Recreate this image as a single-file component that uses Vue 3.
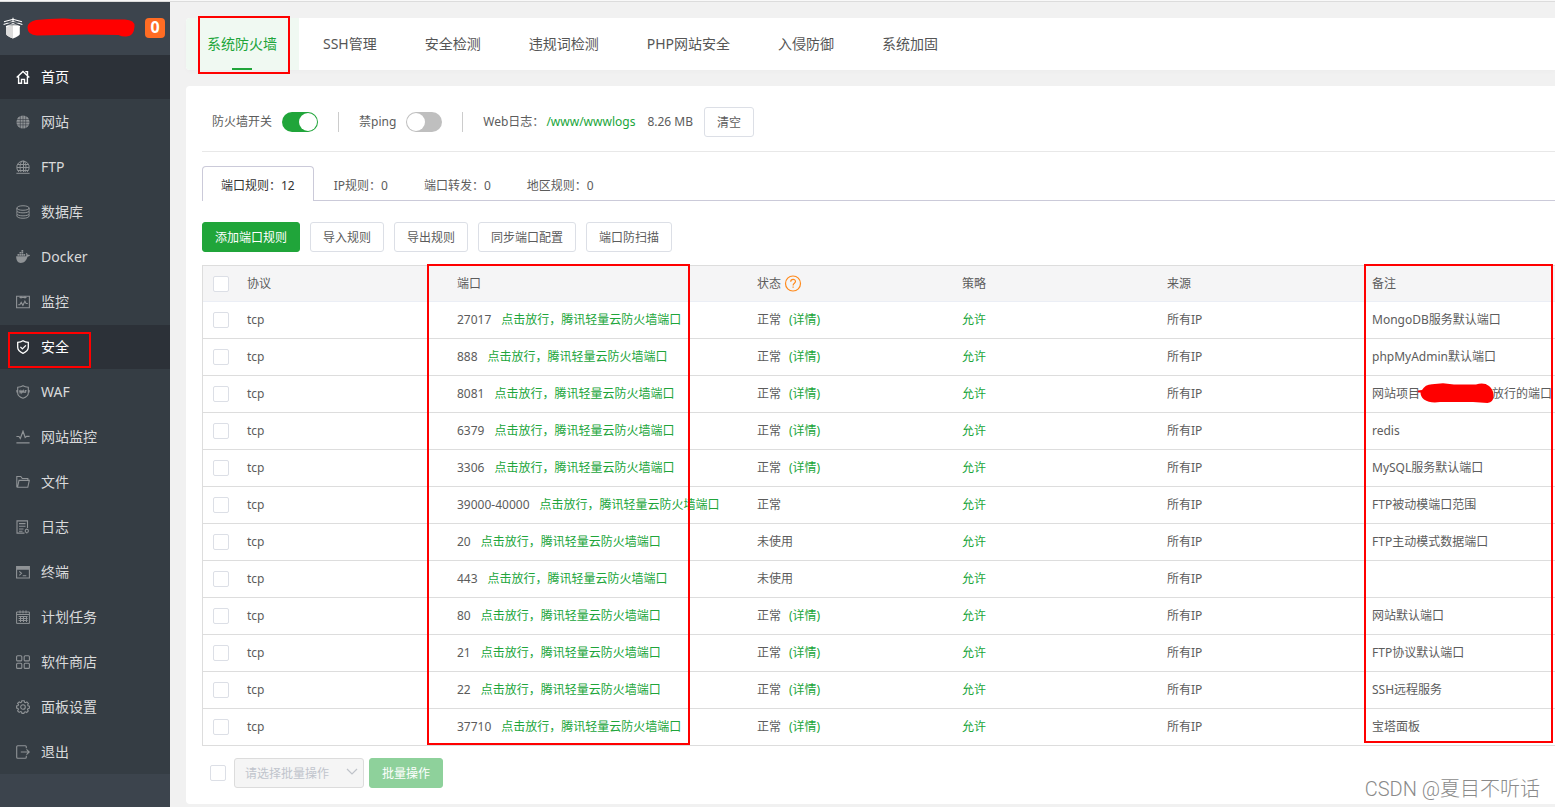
<script setup>
import { ref } from 'vue'

const menu = [
  { label: '首页', active: true, size: 1.4, lines: 'M.7 7.6 7 1.4l6.3 6.2M2.6 6.4v6.9h2.9V9.4h3v3.9h2.9V6.4M9.3 1.6h2.2v3.6' },
  { label: '网站', fill: 'M7 .4a6.6 6.6 0 1 0 0 13.2A6.6 6.6 0 0 0 7 .4z', cut: 'M0 4.5h14M0 7.2h14M0 9.9h14M4.3 0v14M7 0v14M9.7 0v14' },
  { label: 'FTP', size: 1, lines: 'M3 12a6.2 6.2 0 1 1 8 0M1 7.500h12M1.8 4.500h10.4M1.8 10.500h10.4M7.500.8V12M6 .8C3.600 3.600 3.600 9 5 12M8 .8C10.400 3.600 10.400 9 9 12M.4 13.300h13.200' },
  { label: '数据库', size: 1, lines: 'M.9 3c0-3 12.200-3 12.200 0s-12.200 3-12.200 0zM.9 3v2.600c0 3 12.200 3 12.200 0V3M.9 6.200v2.400c0 3 12.200 3 12.200 0V6.200M.9 9.200v1.800c0 3 12.200 3 12.200 0V9.200' },
  { label: 'Docker', fill: 'M.2 6.200h9.900c.4-.8.3-1.800-.2-2.600l.7-.6c.7.5 1.100 1.100 1.200 1.900.8-.1 1.600 0 2.200.4-.5 1-1.400 1.400-2.500 1.400C10.500 10.200 8.300 12.900 4.800 12.900 1.800 12.900 0 10.400.2 6.200zM1.500 3.900h1.700v1.900H1.500zM3.500 3.900h1.700v1.900H3.500zM5.500 3.900h1.700v1.900H5.500zM7.500 3.900h1.700v1.900H7.500zM3.500 2h1.700v1.600H3.500zM5.500 2h1.700v1.600H5.500zM5.500.1h1.700v1.600H5.500z' },
  { label: '监控', size: 1.1, lines: 'M.6 1.200h12.800v11.600H.6zM2.200 9.800h1.600l1.400-2.400 1.700 2.900 2-4 1.200 2.200h1.700M3.500 2.500h7M5 1.500v2M9 1.500v2' },
  { label: '安全', active: true, size: 1.3, lines: 'M7 .8c1.800 1.200 3.500 1.500 5.300 1.600v4.900c0 2.900-2.300 4.700-5.300 6-3-1.300-5.300-3.100-5.300-6V2.400C3.500 2.300 5.200 2 7 .8zM4.400 6.900l2 2 3.500-3.500' },
  { label: 'WAF', size: 1.1, lines: 'M7 .8c1.800 1.100 3.300 1.300 5.300 1.400v6c0 2.500-2.600 4-5.300 5-2.700-1-5.300-2.500-5.300-5v-6c2-.1 3.500-.3 5.300-1.400zM3.500 5.300l.6 2.400.8-2 .8 2 .6-2.400M6.600 7.700l.7-2.200.9 2.200M9.200 7.900V5.500h1.400M9.200 6.700h1.200M.9 5v2.500M13.100 5v2.500' },
  { label: '网站监控', size: 1.2, lines: 'M.4 6.500H3l1.300 2L7 1.200l2.200 6.300 1.400-1.200h3M.4 12.900h13.200' },
  { label: '文件', size: 1.1, lines: 'M.8 12.300V1.500h4l1.500 2h5.600v1.900M.8 12.300h11l1.500-6.900H3L1.500 12.300' },
  { label: '日志', size: 1.1, lines: 'M11.500 8V.9H1v12.200h7.500M3 3.600h6.500M3 6.300h6.500M3 9h4.500M3 11.200h3.500M10.800 9.300a1.600 1.600 0 1 0 0 3.200 1.600 1.600 0 0 0 0-3.200M10.800 8.600v.8M10.800 12.500v1' },
  { label: '终端', size: 1.1, lines: 'M.6 1.500h12.800v11.500H.6zM.6 2.400h12.800M.6 3.300h12.800M.6 4.100h12.800M3.300 6.300l2.200 2-2.200 2M6.700 10.800h3.600' },
  { label: '计划任务', size: 1, lines: 'M.6 2h12.800v11.400H.6zM.6 4.500h12.800M4 .4v3M7 .4v3M10 .4v3M2.600 6.500h9M2.600 8.500h9M2.600 10.500h9M4.500 6v6M7.500 6v6M10.500 6v6' },
  { label: '软件商店', size: 1.1, lines: 'M1.600.7h3.200q1 0 1 1v3.200q0 1-1 1H1.600q-1 0-1-1V1.700q0-1 1-1zM9.200.7h3.200q1 0 1 1v3.200q0 1-1 1H9.200q-1 0-1-1V1.700q0-1 1-1zM1.600 8.200h3.200q1 0 1 1v3.200q0 1-1 1H1.600q-1 0-1-1V9.200q0-1 1-1zM9.200 8.200h3.200q1 0 1 1v3.200q0 1-1 1H9.200q-1 0-1-1V9.200q0-1 1-1z' },
  { label: '面板设置', size: 1.1, lines: 'M5.800.8h2.400l.4 1.500 1 .4 1.300-.8 1.500 1.600-.7 1.300.3 1 1.400.4v2l-1.500.5-.4 1 .8 1.300-1.600 1.500-1.300-.7-1 .3-.5 1.300H6l-.5-1.400-1-.4-1.300.8-1.600-1.600.8-1.300-.4-1L.6 8V6l1.500-.4.4-1-.9-1.300L3.200 1.900l1.300.7 1-.4zM7 4.700a2.300 2.300 0 1 0 0 4.600 2.300 2.300 0 0 0 0-4.600z' },
  { label: '退出', size: 1.1, lines: 'M10.300 3.300V1.800q0-1-1-1H1.700q-1 0-1 1v10.400q0 1 1 1h7.600q1 0 1-1v-1.500M4.800 7h8.400M10.500 4.300 13.200 7l-2.700 2.700' }
]

const sections = ['系统防火墙', 'SSH管理', '安全检测', '违规词检测', 'PHP网站安全', '入侵防御', '系统加固']

const ruleTabs = [
  { name: '端口规则', count: 12 },
  { name: 'IP规则', count: 0 },
  { name: '端口转发', count: 0 },
  { name: '地区规则', count: 0 }
]

const actions = ['导入规则', '导出规则', '同步端口配置', '端口防扫描']

const rules = [
  { port: '27017', used: true, detail: true, note: 'MongoDB服务默认端口' },
  { port: '888', used: true, detail: true, note: 'phpMyAdmin默认端口' },
  { port: '8081', used: true, detail: true, note: '网站项目', noteEnd: '放行的端口' },
  { port: '6379', used: true, detail: true, note: 'redis' },
  { port: '3306', used: true, detail: true, note: 'MySQL服务默认端口' },
  { port: '39000-40000', used: true, detail: false, note: 'FTP被动模端口范围' },
  { port: '20', used: false, detail: false, note: 'FTP主动模式数据端口' },
  { port: '443', used: false, detail: false, note: '' },
  { port: '80', used: true, detail: true, note: '网站默认端口' },
  { port: '21', used: true, detail: true, note: 'FTP协议默认端口' },
  { port: '22', used: true, detail: true, note: 'SSH远程服务' },
  { port: '37710', used: true, detail: true, note: '宝塔面板' }
]

const firewallOn = ref(true)
const pingBlocked = ref(false)
</script>

<template>
  <div class="app">
    <aside class="sidebar">
      <header class="brand">
        <svg class="logo" viewBox="0 0 20 22" aria-hidden="true">
          <path d="M3.200 9 10 7.500 16.800 9v8q0 1.700-6.800 4.500-6.800-2.800-6.800-4.500z" fill="#fff" />
          <path d="M10 7.500v14q-6.800-2.800-6.800-4.500V9z" fill="#dcdcdc" />
          <path d="M1 4.800 10 2.200l9 2.600M.6 7.600 10 4.600l9.400 3M3 9.700l7-3 7 3M10 .8v4" fill="none" stroke="#fff" stroke-width="1.100" />
          <path d="M4.500 5.500h11M3.500 7.800h13" stroke="#454d55" stroke-width=".7" />
        </svg>
        <svg class="mask" viewBox="0 0 108 20" aria-hidden="true">
          <path d="M9 2Q22 .7 35 .6 40 0 45 1.300L98 1.500q10 .5 9.500 7-.5 9.500-8 10-4 .5-8-1.500L60 16.500 10 17.500Q.5 17 .5 9.500.5 4 9 2z" fill="#f00" />
        </svg>
        <span class="badge">0</span>
      </header>
      <nav class="menu">
        <a v-for="item in menu" :key="item.label" href="#" class="menu-item" :class="{ active: item.active }">
          <svg class="menu-icon" viewBox="0 0 14 14" aria-hidden="true">
            <path v-if="item.fill" :d="item.fill" class="solid" />
            <path v-if="item.cut" :d="item.cut" class="cut" />
            <path v-if="item.lines" :d="item.lines" class="line" :stroke-width="item.size" />
          </svg>
          <span>{{ item.label }}</span>
        </a>
        <span class="mark mark-menu"></span>
      </nav>
    </aside>

    <main class="main">
      <nav class="sections">
        <a v-for="(s, i) in sections" :key="s" href="#" class="section" :class="{ current: i === 0 }">{{ s }}</a>
        <span class="mark mark-section"></span>
      </nav>

      <section class="card">
        <div class="settings">
          <label for="firewall">防火墙开关</label>
          <input id="firewall" v-model="firewallOn" class="switch" type="checkbox" role="switch" />
          <i class="divider"></i>
          <label for="ping">禁ping</label>
          <input id="ping" v-model="pingBlocked" class="switch" type="checkbox" role="switch" />
          <i class="divider"></i>
          <span>Web日志：</span>
          <a href="#" class="log-path">/www/wwwlogs</a>
          <span class="log-size">8.26 MB</span>
          <button type="button" class="btn">清空</button>
        </div>

        <nav class="tabs">
          <a v-for="(t, i) in ruleTabs" :key="t.name" href="#" class="tab" :class="{ current: i === 0 }">{{ t.name }}：{{ t.count }}</a>
        </nav>

        <div class="actions">
          <button type="button" class="btn primary">添加端口规则</button>
          <button v-for="a in actions" :key="a" type="button" class="btn">{{ a }}</button>
        </div>

        <div class="table-wrap">
          <table class="rules">
            <colgroup>
              <col class="c-check" />
              <col class="c-proto" />
              <col class="c-port" />
              <col class="c-mid" />
              <col class="c-mid" />
              <col class="c-mid" />
              <col />
            </colgroup>
            <thead>
              <tr>
                <th><input type="checkbox" class="check" aria-label="全选" /></th>
                <th>协议</th>
                <th>端口</th>
                <th>
                  <span class="with-help">状态
                    <svg class="help" viewBox="0 0 18 18" aria-hidden="true">
                      <circle cx="9" cy="8.500" r="7.500" fill="none" stroke="#ff8a1c" stroke-width="1.200" />
                      <path d="M6.700 6.700c0-3.100 4.800-3.100 4.800-.2 0 1.800-2.400 1.700-2.400 3.900M9.100 11.600v1.200" fill="none" stroke="#ff8a1c" stroke-width="1.200" />
                    </svg>
                  </span>
                </th>
                <th>策略</th>
                <th>来源</th>
                <th>备注</th>
              </tr>
            </thead>
            <tbody>
              <tr v-for="r in rules" :key="r.port">
                <td><input type="checkbox" class="check" :aria-label="r.port" /></td>
                <td>tcp</td>
                <td>{{ r.port }}<a href="#" class="release">点击放行，腾讯轻量云防火墙端口</a></td>
                <td>{{ r.used ? '正常' : '未使用' }}<a v-if="r.detail" href="#" class="detail">(详情)</a></td>
                <td><a href="#">允许</a></td>
                <td>所有IP</td>
                <td>
                  <span v-if="r.noteEnd" class="masked-note">{{ r.note }}
                    <svg class="note-mask" viewBox="0 0 78 22" aria-hidden="true">
                      <path d="M0 7.500 4 7Q7 1.500 14 1.200L25 .2 36 1.500 58 1.500Q66-1 71 3q4 3 4.500 8.500.5 8-6 8.500L55 19H22Q12 20.500 6 16.500 2.500 13.500 2.500 9.500L0 9.500z" fill="#f00" />
                    </svg>{{ r.noteEnd }}</span>
                  <template v-else>{{ r.note }}</template>
                </td>
              </tr>
            </tbody>
          </table>
          <span class="mark mark-port"></span>
          <span class="mark mark-note"></span>
        </div>

        <div class="batch">
          <input type="checkbox" class="check" aria-label="全选" />
          <div class="select-box">
            <select class="select" aria-label="批量操作" disabled>
              <option>请选择批量操作</option>
            </select>
            <svg class="caret" viewBox="0 0 12 8" aria-hidden="true">
              <path d="M1 1l5 5 5-5" fill="none" stroke="#bfc3c9" stroke-width="1.200" />
            </svg>
          </div>
          <button type="button" class="btn primary" disabled>批量操作</button>
        </div>
      </section>
      <div class="watermark">CSDN @夏目不听话</div>
    </main>
  </div>
</template>

<style>
body {
  border-top: 1px solid #f8f8f8;
  background: #f1f1f1;
}
</style>

<style scoped>
* {
  box-sizing: border-box;
}

.app {
  display: flex;
  min-height: calc(100vh - 1px);
  border-top: 1px solid #dcdcdc;
  background: #f1f1f1;
  color: #5c5c5c;
  font: 12px/18px "Noto Sans", "Noto Sans CJK SC", sans-serif;
  overflow: hidden;
}

a {
  color: #20a53a;
  text-decoration: none;
}

.sidebar {
  flex: none;
  width: 170px;
  background: #3c444d;
}

.brand {
  display: flex;
  align-items: center;
  height: 53px;
  padding: 0 5px 2px 3px;
}

.logo {
  width: 20px;
  height: 22px;
}

.mask {
  width: 108px;
  height: 20px;
  margin-left: 4px;
}

.badge {
  width: 20px;
  height: 20px;
  margin-left: auto;
  border-radius: 4px;
  background: #ff6c24;
  color: #fff;
  font-size: 16px;
  font-weight: 700;
  line-height: 19px;
  text-align: center;
}

.menu {
  position: relative;
  display: flex;
  flex-direction: column;
  gap: 1px;
  background: #353d44;
}

.menu-item {
  display: flex;
  align-items: center;
  gap: 11px;
  height: 44px;
  padding-left: 16px;
  color: #d9dadb;
  font-size: 14px;
  line-height: 20px;
}

.menu-item.active {
  background: #2c3138;
  color: #fff;
}

.menu-icon {
  width: 14px;
  height: 14px;
  color: #8f9396;
}

.active .menu-icon {
  color: #fff;
}

.line {
  fill: none;
  stroke: currentColor;
}

.solid {
  fill: currentColor;
}

.cut {
  fill: none;
  stroke: #353d44;
  stroke-width: 0.6px;
}

.mark {
  position: absolute;
  border: 2px solid #f00;
  pointer-events: none;
}

.mark-menu {
  left: 8px;
  top: 277px;
  width: 83px;
  height: 36px;
}

.main {
  position: relative;
  flex: 1;
  min-width: 0;
  padding: 16px 0 3px 16px;
}

.sections {
  position: relative;
  display: flex;
  height: 52px;
  border-radius: 4px 0 0 4px;
  background: #fff;
  box-shadow: 0 2px 4px rgba(0, 0, 0, 0.02);
}

.section {
  padding: 0 24px;
  color: #555;
  font-size: 14px;
  line-height: 52px;
  white-space: nowrap;
}

.section.current {
  position: relative;
  padding: 0 22px 0 21px;
  border-radius: 4px 0 0 4px;
  background: #f0f9f2;
  color: #20a53a;
}

.section.current::after {
  content: "";
  position: absolute;
  left: 46px;
  bottom: 0;
  width: 20px;
  height: 2px;
  background: #20a53a;
}

.mark-section {
  left: 12px;
  top: -2px;
  width: 92px;
  height: 58px;
}

.card {
  margin-top: 16px;
  padding: 0 0 16px 16px;
  border-radius: 4px 0 0 4px;
  background: #fff;
}

.settings {
  display: flex;
  align-items: center;
  height: 66px;
  padding: 6px 0 0 10px;
  border-bottom: 1px solid #e8e8e8;
  line-height: 20px;
  white-space: nowrap;
}

.switch {
  appearance: none;
  width: 36px;
  height: 20px;
  margin: 0 0 0 10px;
  padding: 1px;
  border-radius: 10px;
  background: #bfbfbf;
}

.switch::before {
  content: "";
  display: block;
  width: 18px;
  height: 18px;
  border-radius: 50%;
  background: #fff;
}

.switch:checked {
  background: #20a53a;
}

.switch:checked::before {
  margin-left: auto;
}

.divider {
  width: 1px;
  height: 20px;
  margin: 0 20px;
  background: #ccc;
}

.log-path {
  margin-left: 2px;
}

.log-size {
  margin: 0 11px 0 12px;
}

.btn {
  height: 30px;
  padding: 2px 12px 0;
  border: 1px solid #dcdfe6;
  border-radius: 3px;
  background: #fff;
  color: #5c5c5c;
  font: inherit;
  white-space: nowrap;
}

.btn.primary {
  border-color: #20a53a;
  background: #20a53a;
  color: #fff;
}

.btn.primary:disabled {
  opacity: 0.5;
}

.tabs {
  display: flex;
  height: 35px;
  margin-top: 14px;
  border-bottom: 1px solid #cbcad9;
}

.tab {
  height: 35px;
  padding: 0 18px;
  color: #5c5c5c;
  line-height: 40px;
  white-space: nowrap;
}

.tab.current {
  margin-right: 2px;
  border: 1px solid #cbcad9;
  border-bottom: 0;
  border-radius: 4px 4px 0 0;
  background: #fff;
  color: #333;
  line-height: 38px;
}

.actions {
  display: flex;
  gap: 10px;
  margin: 21px 0 13px;
}

.table-wrap {
  position: relative;
}

.rules {
  width: 100%;
  border: 1px solid #ddd;
  border-right: 0;
  border-bottom: 0;
  border-spacing: 0;
  table-layout: fixed;
}

.c-check {
  width: 34px;
}

.c-proto {
  width: 210px;
}

.c-port {
  width: 300px;
}

.c-mid {
  width: 205px;
}

th,
td {
  height: 37px;
  padding: 0 0 0 10px;
  border-bottom: 1px solid #ddd;
  font-weight: 400;
  text-align: left;
  white-space: nowrap;
}

th {
  height: 36px;
  border-bottom-color: #ebeef5;
  background: #f5f5f6;
}

.check {
  appearance: none;
  display: block;
  flex: none;
  width: 16px;
  height: 16px;
  margin: 0;
  border: 1px solid #dcdfe6;
  border-radius: 2px;
  background: #fff;
}

.with-help {
  display: flex;
  align-items: center;
  gap: 3px;
}

.help {
  width: 18px;
  height: 18px;
}

.release {
  margin-left: 10px;
}

.detail {
  margin-left: 8px;
}

.masked-note {
  display: flex;
  align-items: center;
}

.note-mask {
  position: relative;
  flex: none;
  width: 78px;
  height: 22px;
  margin: 0 -4px 0 -2px;
}

.mark-port {
  left: 225px;
  top: -1px;
  bottom: 1px;
  width: 263px;
}

.mark-note {
  right: 2px;
  top: -1px;
  bottom: 3px;
  width: 189px;
}

.batch {
  display: flex;
  align-items: center;
  margin-top: 12px;
  padding-left: 8px;
}

.select-box {
  position: relative;
  width: 130px;
  margin: 0 5px 0 8px;
}

.select {
  display: block;
  appearance: none;
  width: 100%;
  height: 30px;
  padding: 2px 10px 0;
  border: 1px solid #dcdcdc;
  border-radius: 3px;
  background: #f5f5f5;
  color: #c0c4cc;
  font: inherit;
  opacity: 1;
}

.caret {
  position: absolute;
  right: 6px;
  top: 10px;
  width: 12px;
  height: 8px;
}

.watermark {
  position: absolute;
  right: 15px;
  bottom: 4px;
  color: #8a8a8a;
  font: 300 20px/28px Roboto, "Noto Sans CJK SC", sans-serif;
}
</style>
